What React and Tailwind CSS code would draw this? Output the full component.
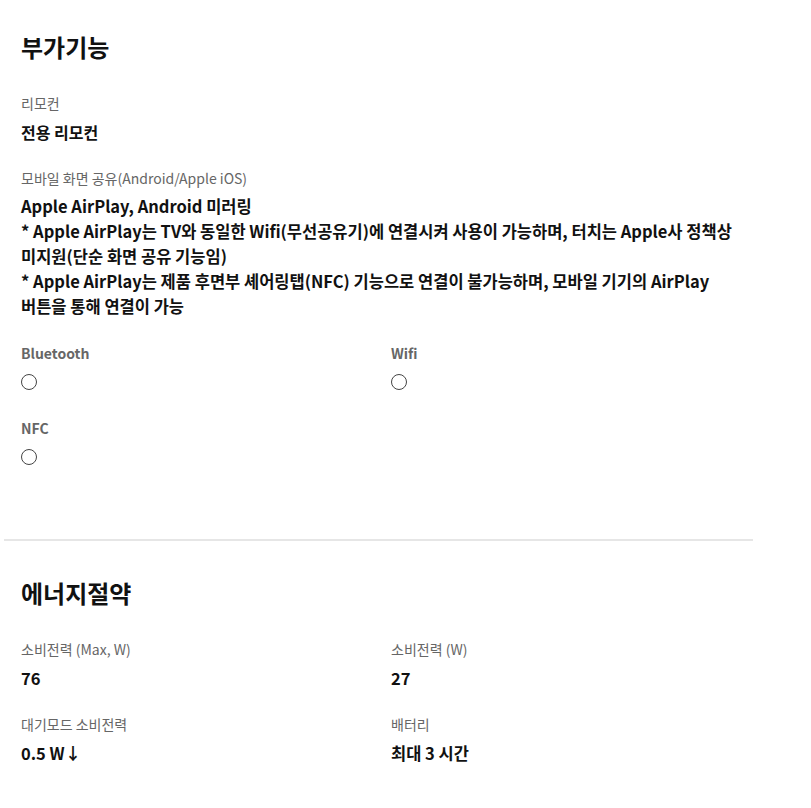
export default function App() {
  const font = { fontFamily: '"Noto Sans CJK KR", "Noto Sans", sans-serif' };
  return (
    <div className="w-[811px] min-h-[808px] bg-white px-[4px] break-keep" style={font}>
      <div className="w-[749px]">
        <section className="pl-[17px] pt-[31px] pb-[74px]">
          <h2 className="text-[24px] leading-[32px] font-bold text-[#111]">부가기능</h2>
          <div className="mt-[30px]">
            <p className="text-[14px] leading-[20px] text-[#666]">리모컨</p>
            <p className="mt-[7px] text-[16px] leading-[24px] font-bold text-[#111]">전용 리모컨</p>
          </div>
          <div className="mt-[24px]">
            <p className="text-[14px] leading-[20px] text-[#666]">모바일 화면 공유(Android/Apple iOS)</p>
            <div className="mt-[6px] w-[720px] text-[16.5px] leading-[25px] font-bold text-[#111]">
              <p>Apple AirPlay, Android 미러링</p>
              <p>* Apple AirPlay는 TV와 동일한 Wifi(무선공유기)에 연결시켜 사용이 가능하며, 터치는 Apple사 정책상 미지원(단순 화면 공유 기능임)</p>
              <p>* Apple AirPlay는 제품 후면부 셰어링탭(NFC) 기능으로 연결이 불가능하며, 모바일 기기의 AirPlay 버튼을 통해 연결이 가능</p>
            </div>
          </div>
          <div className="mt-[24px] grid grid-cols-[370px_1fr] gap-y-[28px]">
            {["Bluetooth", "Wifi", "NFC"].map((t) => (
              <div key={t}>
                <p className="text-[14px] leading-[20px] font-semibold text-[#666]">{t}</p>
                <div className="mt-[11px] w-[16px] h-[16px] rounded-full border-[1.5px] border-[#444]" />
              </div>
            ))}
          </div>
        </section>
        <div className="h-[2px] bg-[#e6e6e6]" />
        <section className="pl-[17px] pt-[36px] pb-[30px]">
          <h2 className="text-[24px] leading-[32px] font-bold text-[#111]">에너지절약</h2>
          <div className="mt-[30px] grid grid-cols-[370px_1fr] gap-y-[24px]">
            {[
              ["소비전력 (Max, W)", "76"],
              ["소비전력 (W)", "27"],
              ["대기모드 소비전력", "0.5 W↓"],
              ["배터리", "최대 3 시간"],
            ].map(([l, v]) => (
              <div key={l}>
                <p className="text-[14px] leading-[20px] text-[#666]">{l}</p>
                <p className="mt-[7px] text-[16.5px] leading-[24px] font-bold text-[#111]">{v}</p>
              </div>
            ))}
          </div>
        </section>
      </div>
    </div>
  );
}
